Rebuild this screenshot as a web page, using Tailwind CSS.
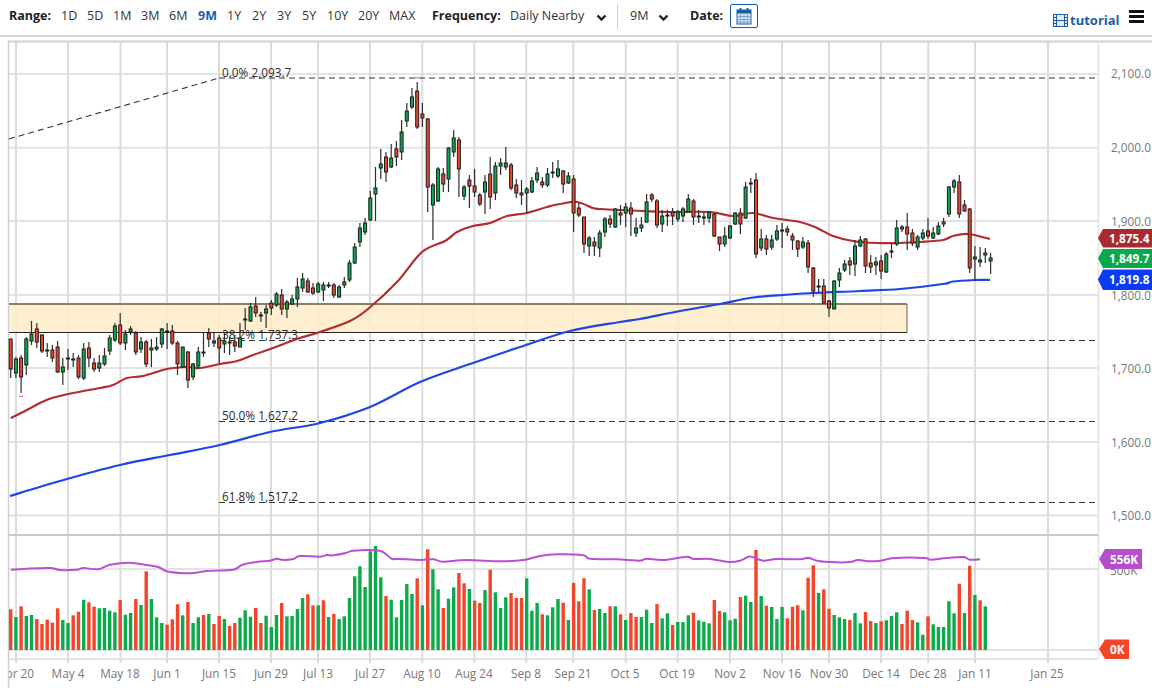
<!DOCTYPE html>
<html lang="en">
<head>
  <meta charset="utf-8"/>
  <meta name="viewport" content="width=device-width, initial-scale=1.0"/>
  <title>Gold Futures Chart</title>
  <script src="https://cdn.jsdelivr.net/npm/@tailwindcss/browser@4"></script>
</head>
<body class="bg-white w-[1152px] h-[688px] overflow-hidden font-['Open_Sans',sans-serif] text-[12.5px] text-[#333]">
  <!-- toolbar -->
  <div class="flex items-start h-[37px] border-b-2 border-[#d6d6d6] pl-[9px]">
    <span class="font-bold text-[#222] w-[52px] pt-[7px] leading-[18px]">Range:</span>
    <div class="flex pt-[7px] leading-[18px]">
      <span class="w-[26px]">1D</span>
      <span class="w-[26px]">5D</span>
      <span class="w-[28px]">1M</span>
      <span class="w-[28px]">3M</span>
      <span class="w-[29px]">6M</span>
      <span class="w-[29px] font-bold text-[#1a5fa8]">9M</span>
      <span class="w-[25px]">1Y</span>
      <span class="w-[25px]">2Y</span>
      <span class="w-[25px]">3Y</span>
      <span class="w-[25px]">5Y</span>
      <span class="w-[31px]">10Y</span>
      <span class="w-[31px]">20Y</span>
      <span class="w-[43px]">MAX</span>
    </div>
    <span class="font-bold text-[#222] w-[78px] pt-[7px] leading-[18px]">Frequency:</span>
    <span class="w-[86px] pt-[7px] leading-[18px]">Daily Nearby</span>
    <svg class="mt-[14px] w-[11px] h-[8px]" viewBox="0 0 11 8"><path d="M1.500 1.500 L5.500 5.500 L9.500 1.500" fill="none" stroke="#222" stroke-width="2.400"/></svg>
    <div class="ml-[10px] mt-[4px] h-[25px] w-px bg-[#d0d0d0]"></div>
    <span class="ml-[12px] w-[28px] pt-[7px] leading-[18px]">9M</span>
    <svg class="mt-[14px] w-[11px] h-[8px]" viewBox="0 0 11 8"><path d="M1.500 1.500 L5.500 5.500 L9.500 1.500" fill="none" stroke="#222" stroke-width="2.400"/></svg>
    <span class="ml-[21px] font-bold text-[#222] w-[40px] pt-[7px] leading-[18px]">Date:</span>
    <div class="mt-[4px] w-[28px] h-[24px] border border-[#1a5fa8] rounded-[2px] flex items-center justify-center">
      <svg class="w-[16px] h-[18px]" viewBox="0 0 16 18">
        <rect x="1" y="3" width="14" height="14" fill="#dbe7f3" stroke="#1a5fa8"/>
        <rect x="1" y="3" width="14" height="3.500" fill="#1a5fa8"/>
        <path d="M4.500 1v4M11.500 1v4" stroke="#1a5fa8" stroke-width="2"/>
        <path d="M4.500 7v10M8 7v10M11.500 7v10M1 9.500h14M1 12.500h14M1 15h14" stroke="#6d97c4" stroke-width="0.800"/>
      </svg>
    </div>
    <div class="ml-auto flex items-center pt-[12px] pr-[8px]">
      <svg class="w-[15px] h-[13px] mr-[2px]" viewBox="0 0 15 13">
        <rect x="0.500" y="0.500" width="14" height="12" fill="#e4edf6" stroke="#1a5fa8"/>
        <path d="M3.500 0.500v12M11.500 0.500v12M3.500 6.500h8M0.500 3.500h3M0.500 6.500h3M0.500 9.500h3M11.500 3.500h3M11.500 6.500h3M11.500 9.500h3" stroke="#1a5fa8" fill="none"/>
      </svg>
      <span class="font-bold text-[#1a5fa8] text-[13px] leading-[17px] w-[59px]">tutorial</span>
      <div class="flex flex-col gap-[2px] w-[15px] -mt-[8px]">
        <div class="h-[3px] bg-[#111]"></div>
        <div class="h-[3px] bg-[#111]"></div>
        <div class="h-[3px] bg-[#111]"></div>
      </div>
    </div>
  </div>

  <!-- chart: svg coordinates are page coordinates -->
  <svg class="block w-[1152px] h-[651px]" viewBox="0 37 1152 651" font-family="Open Sans, sans-serif" font-size="11.800">
    <defs><clipPath id="plotClip"><rect x="9" y="37" width="1143" height="651"/></clipPath></defs>

    <g stroke="#e3e3e3" stroke-width="2" id="grid">
      <path d="M9 74H1098M9 147.700H1098M9 221H1098M9 295H1098M9 368H1098M9 442H1098M9 515.500H1098M9 569H1098M9 650H1098M9 659H1098"/>
      <path stroke="#dcdcdc" d="M16 42V663M68 42V663M120.500 42V663M167 42V663M219 42V663M271 42V663M318 42V663M370 42V663M422.300 42V663M474.300 42V663M526.300 42V663M573.300 42V663M625.700 42V663M677.700 42V663M730 42V663M782 42V663M829 42V663M881 42V663M928.300 42V663M975 42V663M1048 42V663"/>
    </g>
    <path d="M8 41.500H1152" stroke="#d0d0d0" stroke-width="2"/>
    <path d="M8.500 41V688" stroke="#cfcfcf" stroke-width="1.500"/>
    <path d="M1098.500 41V659" stroke="#e2e2e2" stroke-width="1.500"/>
    <path d="M9 535H1098" stroke="#c9c9c9" stroke-width="2"/>

    <!-- price axis -->
    <g fill="#777">
      <text x="1111" y="78">2,100.0</text>
      <text x="1111" y="152">2,000.0</text>
      <text x="1111" y="226">1,900.0</text>
      <text x="1111" y="300">1,800.0</text>
      <text x="1111" y="373">1,700.0</text>
      <text x="1111" y="447">1,600.0</text>
      <text x="1111" y="520">1,500.0</text>
      <text x="1110" y="575">500K</text>
    </g>

    <!-- date axis -->
    <g fill="#777" text-anchor="middle" clip-path="url(#plotClip)">
      <text x="16" y="678">Apr 20</text>
      <text x="68" y="678">May 4</text>
      <text x="120" y="678">May 18</text>
      <text x="167" y="678">Jun 1</text>
      <text x="219" y="678">Jun 15</text>
      <text x="271" y="678">Jun 29</text>
      <text x="318" y="678">Jul 13</text>
      <text x="370" y="678">Jul 27</text>
      <text x="422" y="678">Aug 10</text>
      <text x="474" y="678">Aug 24</text>
      <text x="526" y="678">Sep 8</text>
      <text x="573" y="678">Sep 21</text>
      <text x="625" y="678">Oct 5</text>
      <text x="677" y="678">Oct 19</text>
      <text x="730" y="678">Nov 2</text>
      <text x="782" y="678">Nov 16</text>
      <text x="829" y="678">Nov 30</text>
      <text x="881" y="678">Dec 14</text>
      <text x="928" y="678">Dec 28</text>
      <text x="975" y="678">Jan 11</text>
      <text x="1047" y="678">Jan 25</text>
    </g>

    <!-- supply zone -->
    <rect x="9" y="304" width="898" height="28.500" fill="#fdecc8" fill-opacity="0.85"/>
    <path d="M9 304H907" stroke="#8b7f6c" stroke-width="1.800"/>
    <path d="M9 332.500H907" stroke="#2a2118" stroke-width="1.200"/>
    <path d="M907 304V333" stroke="#6b6255" stroke-width="1"/>

    <!-- fibonacci -->
    <g stroke="#333" stroke-width="1.100" stroke-dasharray="6 4" fill="none">
      <path d="M9 139L219 78"/>
      <path d="M219 78H1098"/>
      <path d="M219 340.500H1098"/>
      <path d="M219 421.500H1098"/>
      <path d="M219 502.500H1098"/>
    </g>
    <g fill="#2b2b2b">
      <text x="222" y="77">0.0% 2,093.7</text>
      <text x="222" y="339">38.2% 1,737.3</text>
      <text x="222" y="420">50.0% 1,627.2</text>
      <text x="222" y="501">61.8% 1,517.2</text>
    </g>

    <!-- moving averages, smoothed from their points below -->
    <path id="ma200" fill="none" stroke="#1f45e6" stroke-width="2.200" data-points="10,496 60,481 120,465 170,455 220,445 270,432 320,423 370,407 420,382 470,364 520,347 570,331 620,322 640,319 680,311 720,304 750,298 783,295 813,293 860,291 900,289 943,284 953,281.500 975,280 990,280"/>
    <path id="ma50" fill="none" stroke="#b42c30" stroke-width="2.200" data-points="10.700,418 23,412 40,403 52,398 73,393 100,388 113,385 127,378 143,376 167,369 187,367 200,368 220,364 237,361 253,355 273,348 297,339 320,332 350,321 368,309 397,282 422,252 445,241 457,232 473,226 490,223 507,216 527,213 547,207 560,204 577,202 593,208 600,209 620,210 643,211 670,212 710,212 733,216 753,213 773,218 800,222 817,228 833,236 853,241 877,243 900,243 920,242 943,240 953,236 968,234 990,239"/>
    <path d="M414.500 77.500q2 1 4 0M19 396q2 1.500 4 0" fill="none" stroke="#f0502f" stroke-width="1"/>

    <g id="candles"></g>
    <g id="vols"></g>
    <path id="volMa" fill="none" stroke="#b94fd2" stroke-width="2"/>

    <!-- last value flags -->
    <polygon points="1098,238 1103,229 1152,229 1152,247.500 1103,247.500" fill="#a92b30"/>
    <polygon points="1098,258.500 1103,249 1152,249 1152,268 1103,268" fill="#0ba84c"/>
    <polygon points="1098,279.500 1103,269.500 1152,269.500 1152,290 1103,290" fill="#0c3bf5"/>
    <polygon points="1099,559 1105,549 1142,549 1142,569 1105,569" fill="#b54dcd"/>
    <polygon points="1099,649 1105,639.500 1129,639.500 1129,659 1105,659" fill="#f4442a"/>
    <g fill="#fff" font-weight="700">
      <text x="1109" y="242.500">1,875.4</text>
      <text x="1109" y="263">1,849.7</text>
      <text x="1109" y="284">1,819.8</text>
      <text x="1110" y="563.500">556K</text>
      <text x="1110" y="654">0K</text>
    </g>
  </svg>

  <script>
    const X = i => 10.7 + 5.212 * i;
    const GREEN = '#0aa84f', RED = '#f0432a';

    // high, body top, body bottom, low, 1 = up
    const candles = [
      [339,339,369,378,0],[357,359,373,378,1],[355,358,377,393,0],[337,339,365,375,1],[321,334,341,345,1],
      [323,329,342,348,0],[334,335,351,353,0],[343,350,351,357,0],[345,350,358,362,0],[341,347,372,373,0],
      [358,367,372,385,1],[349,358,359,370,1],[353,359,360,367,0],[355,358,377,379,0],[343,349,378,380,1],
      [342,348,358,367,0],[358,363,369,372,0],[355,363,368,372,1],[348,356,364,366,1],[335,338,351,355,1],
      [323,326,340,342,1],[313,325,343,345,0],[330,334,343,350,1],[326,329,332,335,1],[331,333,352,355,0],
      [337,342,349,353,1],[340,342,364,367,0],[339,348,350,367,1],[337,347,349,351,1],[328,329,344,348,1],
      [323,331,332,349,0],[325,331,343,345,0],[341,343,364,375,0],[347,347,367,368,1],[351,352,380,388,0],
      [363,364,377,380,1],[347,352,366,369,1],[332,352,353,357,1],[328,333,339,347,0],[332,341,343,347,1],
      [335,338,348,363,0],[332,341,344,353,1],[337,342,343,355,0],[335,342,346,352,0],[323,338,347,347,1],
      [308,319,320,330,1],[303,307,321,322,1],[297,306,313,317,0],[312,315,316,322,0],[305,309,313,328,1],
      [300,303,308,315,0],[292,294,305,307,1],[289,295,309,315,0],[300,302,309,318,1],[295,299,304,305,1],
      [278,287,299,307,1],[273,279,288,292,1],[278,281,292,293,0],[283,288,293,295,0],[282,284,292,293,1],
      [282,285,290,301,1],[282,285,286,288,1],[283,285,295,298,0],[285,287,297,298,1],[277,282,285,288,1],
      [260,263,280,282,1],[243,247,263,264,1],[223,228,242,247,1],[218,223,232,235,1],[191,198,220,221,1],
      [167,188,194,221,1],[149,164,168,179,1],[152,157,172,182,0],[144,158,167,168,1],[141,149,157,166,0],
      [120,132,152,160,1],[103,111,121,127,1],[88,97,107,109,1],[82,91,127,129,0],[103,114,118,127,0],
      [118,119,187,212,0],[183,185,205,240,1],[167,169,201,202,1],[168,174,184,192,0],[147,148,179,192,1],
      [130,138,152,157,1],[137,140,169,197,0],[185,187,196,200,1],[175,180,186,208,0],[169,186,192,197,0],
      [193,195,204,206,0],[175,182,192,214,1],[157,174,197,209,0],[162,166,193,200,1],[158,163,166,175,1],
      [147,163,167,170,1],[163,165,188,190,0],[179,185,193,198,0],[180,193,195,205,0],[187,189,193,213,1],
      [177,181,192,193,1],[167,173,180,183,1],[177,182,185,188,0],[168,174,185,187,1],[162,172,173,178,1],
      [160,169,176,178,1],[170,171,184,193,0],[172,176,183,184,1],[175,179,213,232,0],[203,208,215,217,0],
      [217,217,244,253,0],[236,238,246,256,1],[237,242,246,256,0],[230,233,248,257,1],[217,219,232,237,1],
      [215,219,224,228,0],[208,209,227,228,1],[205,213,215,225,0],[203,207,213,227,1],[202,208,214,236,0],
      [218,228,233,237,1],[217,225,228,232,1],[194,202,222,223,1],[193,195,199,202,0],[199,201,225,228,0],
      [210,216,224,232,1],[210,215,216,226,1],[208,212,216,225,0],[210,212,219,222,1],[207,209,216,222,1],
      [194,199,212,212,1],[199,201,217,225,0],[210,216,217,223,1],[212,217,218,225,1],[212,212,218,223,1],
      [213,214,236,237,0],[237,237,244,251,0],[227,236,244,247,1],[225,226,238,239,1],[212,213,224,225,1],
      [208,213,224,234,0],[182,187,218,219,1],[178,183,184,193,1],[173,180,254,258,0],[229,239,248,251,1],
      [235,239,249,255,0],[235,240,247,250,1],[225,231,239,241,1],[223,230,231,248,1],[226,229,232,236,0],
      [233,236,240,250,0],[240,241,249,257,0],[237,242,247,249,1],[240,243,267,273,0],[267,268,291,297,0],
      [279,286,287,292,1],[279,286,303,304,0],[300,301,308,317,0],[280,281,309,309,1],[268,273,280,287,1],
      [260,264,270,272,1],[257,261,265,275,0],[240,246,264,276,1],[236,240,246,247,1],[238,239,266,273,0],
      [255,263,267,273,0],[257,262,265,275,1],[255,261,271,279,0],[252,254,272,273,1],[243,251,252,258,1],
      [220,228,244,246,1],[225,227,229,232,0],[213,227,234,250,0],[229,233,243,246,0],[235,237,247,250,1],
      [229,233,238,240,1],[218,231,236,239,0],[227,233,238,239,1],[222,226,234,235,1],[218,222,224,227,0],
      [186,187,214,217,1],[179,181,187,193,1],[175,182,214,218,0],[200,205,211,212,0],[208,209,268,273,0],
      [246,257,259,281,1],[247,260,262,267,1],[248,253,255,263,1],[253,258,261,274,1]
    ];
    document.getElementById('candles').innerHTML = candles.map(([h, t, b, l, up], i) => {
      const x = X(i).toFixed(1);
      return `<path d="M${x} ${h}V${l}" stroke="#2e2e2e" stroke-width="1.200"/>` +
        `<rect x="${(X(i) - 1.5).toFixed(1)}" y="${t}" width="3" height="${Math.max(b - t, 1)}" fill="${up ? GREEN : RED}" stroke="#1c1c1c" stroke-width="1"/>`;
    }).join('');

    // bar tops measured from the pane, negative = red
    const vols = [
      -238,261,-229,258,255,-267,-282,-269,-278,-235,270,279,-256,-245,209,-217,-230,235,234,242,247,-210,254,249,-207,225,-124,207,262,279,-284,-268,-223,256,-216,279,262,-255,252,-282,-258,267,-288,-279,263,241,260,-234,-279,257,291,255,-219,259,258,237,204,-193,-226,226,-211,261,-252,267,259,204,139,109,171,64,48,142,-198,209,262,
      210,162,192,-145,226,-58,118,178,-234,206,172,-129,-160,177,-212,-219,180,-119,187,234,202,-189,-204,-204,145,242,219,-253,256,232,207,-218,270,-159,-214,-145,178,-240,237,249,-229,229,-253,270,-249,-261,261,239,279,-222,265,250,-285,276,276,256,-248,271,275,280,-210,-243,247,271,266,-201,197,216,-60,198,-227,231,267,231,-265,-230,-226,
      241,-143,-106,189,-178,-236,255,262,267,-270,249,280,-246,-273,279,-274,271,258,247,-282,-242,-270,277,314,-259,283,291,291,214,250,-161,249,-107,195,-211,229
    ];
    document.getElementById('vols').innerHTML = vols.map((v, i) => {
      const top = 530 + Math.abs(v) / 3;
      return `<rect x="${(X(i) - 1.7).toFixed(1)}" y="${top.toFixed(1)}" width="3.400" height="${(650 - top).toFixed(1)}" fill="${v > 0 ? '#0bab4b' : '#f4442a'}"/>`;
    }).join('');

    // catmull-rom through the read-off points so the averages don't look angular
    function smooth(p) {
      let d = `M${p[0][0]} ${p[0][1]}`;
      for (let i = 0; i < p.length - 1; i++) {
        const a = p[Math.max(i - 1, 0)], b = p[i], c = p[i + 1], e = p[Math.min(i + 2, p.length - 1)];
        const c1 = [b[0] + (c[0] - a[0]) / 6, b[1] + (c[1] - a[1]) / 6];
        const c2 = [c[0] - (e[0] - b[0]) / 6, c[1] - (e[1] - b[1]) / 6];
        d += `C${c1[0].toFixed(1)} ${c1[1].toFixed(1)} ${c2[0].toFixed(1)} ${c2[1].toFixed(1)} ${c[0]} ${c[1]}`;
      }
      return d;
    }
    for (const id of ['ma200', 'ma50']) {
      const el = document.getElementById(id);
      el.setAttribute('d', smooth(el.dataset.points.split(' ').map(s => s.split(',').map(Number))));
    }

    const ma1 = [[33,119],[80,116],[150,114],[180,120],[230,119],[250,114],[295,118],[330,104],[390,98],[440,105],[475,111],[500,124],[540,129],[580,129],[620,123],[700,119],[725,105],[770,96],[810,92],[830,86],[850,90],[880,87],[900,78],[960,80],[980,75],[1000,76],[1040,68],[1060,62],[1130,61],[1155,70],[1175,86],[1200,87]];
    const ma2 = [[60,90],[100,88],[130,95],[200,90],[300,94],[370,90],[420,78],[470,73],[550,76],[570,86],[650,88],[720,92],[740,86],[790,90],[860,80],[880,87],[930,87],[985,96],[1020,92],[1045,80],[1060,82],[1090,92],[1130,87],[1200,88]];
    const ma3 = [[25,83],[55,93],[110,97],[150,96],[175,90],[210,94],[240,92],[285,84],[375,84],[390,89],[440,84],[490,81],[510,89],[540,88]];
    const pts = (a, x0) => a.map(([x, y]) => [+(x0 + x / 3).toFixed(1), +(530 + y / 3).toFixed(1)]);
    document.getElementById('volMa').setAttribute('d', smooth([...pts(ma1, 0), ...pts(ma2, 400), ...pts(ma3, 800)]));
  </script>
</body>
</html>
